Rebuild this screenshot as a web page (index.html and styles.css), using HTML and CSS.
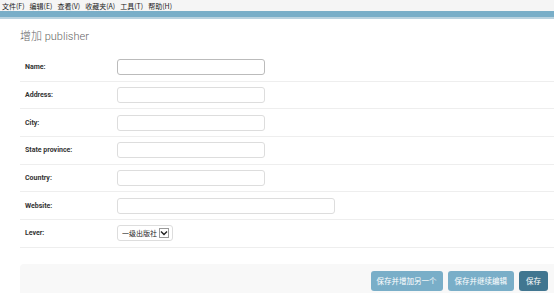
FILE: index.html
```html
<!DOCTYPE html>
<html lang="zh-CN">
<head>
  <meta charset="UTF-8" />
  <meta name="viewport" content="width=device-width, initial-scale=1.0" />
  <title>增加 publisher</title>
  <link rel="stylesheet" href="styles.css">
</head>
<body>
  <div class="menubar">
    <span>文件(F)</span>
    <span>编辑(E)</span>
    <span>查看(V)</span>
    <span>收藏夹(A)</span>
    <span>工具(T)</span>
    <span>帮助(H)</span>
  </div>
  <div class="header"></div>

  <div id="content">
    <h1>增加 publisher</h1>
    <form>
      <div class="form-row">
        <label for="id_name">Name:</label>
        <input type="text" id="id_name" class="focused">
      </div>
      <div class="form-row">
        <label for="id_address">Address:</label>
        <input type="text" id="id_address">
      </div>
      <div class="form-row">
        <label for="id_city">City:</label>
        <input type="text" id="id_city">
      </div>
      <div class="form-row">
        <label for="id_state">State province:</label>
        <input type="text" id="id_state">
      </div>
      <div class="form-row">
        <label for="id_country">Country:</label>
        <input type="text" id="id_country">
      </div>
      <div class="form-row">
        <label for="id_website">Website:</label>
        <input type="text" id="id_website" class="wide">
      </div>
      <div class="form-row">
        <label for="id_lever">Lever:</label>
        <div class="select-box">
          <select id="id_lever">
            <option>一级出版社</option>
            <option>二级出版社</option>
          </select>
          <span class="arrow">
            <svg width="8" height="6" viewBox="0 0 8 6"><path d="M1 1.5 L4 4.5 L7 1.5" fill="none" stroke="#222" stroke-width="1.4"/></svg>
          </span>
        </div>
      </div>

      <div class="submit-row">
        <button type="button">保存并增加另一个</button>
        <button type="button">保存并继续编辑</button>
        <button type="submit" class="default">保存</button>
      </div>
    </form>
  </div>
</body>
</html>
```

FILE: styles.css
```css
* {
  box-sizing: border-box;
}
body {
  margin: 0;
  background: #fff;
  font-family: Roboto, "Liberation Sans", "Noto Sans CJK SC", sans-serif;
  color: #333;
  overflow: hidden;
}

.menubar {
  height: 11px;
  background: #f5f5f5;
  padding-left: 2px;
  display: flex;
  gap: 5px;
  align-items: center;
  font-size: 7px;
  color: #222;
  font-family: "Noto Sans CJK SC", sans-serif;
}

.header {
  height: 8px;
  background: #79aec8;
  border-bottom: 2px solid #b9d2df;
}

#content {
  padding-left: 20px;
}

h1 {
  margin: 0;
  height: 35px;
  line-height: 36px;
  font-size: 11px;
  font-weight: 300;
  color: #666;
  font-family: Roboto, "Noto Sans CJK SC", sans-serif;
}

.form-row {
  display: flex;
  align-items: center;
  height: 27.7px;
  border-bottom: 1px solid #eee;
  padding-left: 5px;
}

.form-row label {
  width: 92px;
  font-size: 7px;
  font-weight: bold;
  color: #333;
}

.form-row input {
  width: 148px;
  height: 16px;
  border: 1px solid #ddd;
  border-radius: 3px;
  padding: 2px 4px;
  font-size: 8px;
}

.form-row input.focused {
  border-color: #bbb;
}

.form-row input.wide {
  width: 218px;
}

.select-box {
  display: inline-flex;
  align-items: center;
  height: 16px;
  border: 1px solid #ddd;
  border-radius: 3px;
  padding: 0 3px 0 4px;
}

.select-box select {
  appearance: none;
  border: none;
  background: transparent;
  padding: 0;
  font-size: 7px;
  color: #222;
  font-family: "Noto Sans CJK SC", sans-serif;
  width: 37px;
}

.arrow {
  display: flex;
  align-items: center;
  justify-content: center;
  width: 10px;
  height: 10px;
  border: 1px solid #999;
  background: #fff;
}

.submit-row {
  margin-top: 16px;
  height: 40px;
  background: #f8f8f8;
  border-radius: 4px 0 0 0;
  display: flex;
  justify-content: flex-end;
  align-items: flex-start;
  gap: 5px;
  padding: 7px 6px 0 0;
}

.submit-row button {
  height: 20px;
  padding: 0 7px;
  border: none;
  border-radius: 3px;
  background: #79aec8;
  color: #fff;
  font-size: 7.5px;
  font-family: "Noto Sans CJK SC", sans-serif;
  cursor: pointer;
}

.submit-row button:first-child {
  padding: 0 6px;
}

.submit-row button.default {
  background: #417690;
}
```
